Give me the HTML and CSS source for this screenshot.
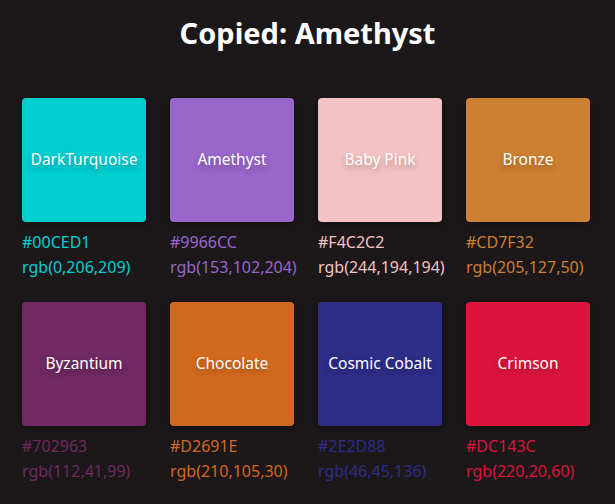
FILE: index.html
```html
<!DOCTYPE html>
<html>
<head>
<meta charset="utf-8">
<link rel="stylesheet" href="styles.css">
</head>
<body>
<h1 class="title">Copied: Amethyst</h1>
<div class="grid">
  <div class="card" style="color:#00CED1">
    <div class="swatch" style="background:#00CED1"><span>DarkTurquoise</span></div>
    <div class="hex">#00CED1</div>
    <div class="rgb">rgb(0,206,209)</div>
  </div>
  <div class="card" style="color:#9966CC">
    <div class="swatch" style="background:#9966CC"><span>Amethyst</span></div>
    <div class="hex">#9966CC</div>
    <div class="rgb">rgb(153,102,204)</div>
  </div>
  <div class="card" style="color:#F4C2C2">
    <div class="swatch" style="background:#F4C2C2"><span>Baby Pink</span></div>
    <div class="hex">#F4C2C2</div>
    <div class="rgb">rgb(244,194,194)</div>
  </div>
  <div class="card" style="color:#CD7F32">
    <div class="swatch" style="background:#CD7F32"><span>Bronze</span></div>
    <div class="hex">#CD7F32</div>
    <div class="rgb">rgb(205,127,50)</div>
  </div>
  <div class="card" style="color:#702963">
    <div class="swatch" style="background:#702963"><span>Byzantium</span></div>
    <div class="hex">#702963</div>
    <div class="rgb">rgb(112,41,99)</div>
  </div>
  <div class="card" style="color:#D2691E">
    <div class="swatch" style="background:#D2691E"><span>Chocolate</span></div>
    <div class="hex">#D2691E</div>
    <div class="rgb">rgb(210,105,30)</div>
  </div>
  <div class="card" style="color:#2E2D88">
    <div class="swatch" style="background:#2E2D88"><span>Cosmic Cobalt</span></div>
    <div class="hex">#2E2D88</div>
    <div class="rgb">rgb(46,45,136)</div>
  </div>
  <div class="card" style="color:#DC143C">
    <div class="swatch" style="background:#DC143C"><span>Crimson</span></div>
    <div class="hex">#DC143C</div>
    <div class="rgb">rgb(220,20,60)</div>
  </div>
</div>
</body>
</html>
```
FILE: styles.css
```css
html, body {
  margin: 0;
  padding: 0;
  background: #1c1819;
}
body {
  font-family: "Noto Sans", "Open Sans", sans-serif;
  width: 615px;
  height: 504px;
  overflow: hidden;
}
.title {
  margin: 0;
  padding-top: 13px;
  height: 98px;
  box-sizing: border-box;
  text-align: center;
  color: #ffffff;
  font-size: 29px;
  font-weight: 700;
  line-height: 40px;
}
.grid {
  display: grid;
  grid-template-columns: repeat(4, 124px);
  column-gap: 24px;
  row-gap: 22px;
  padding-left: 22px;
}
.card {
  display: flex;
  flex-direction: column;
  font-size: 16px;
  line-height: 25px;
}
.swatch {
  width: 124px;
  height: 124px;
  box-sizing: border-box;
  padding-bottom: 1px;
  border-radius: 4px;
  display: flex;
  align-items: center;
  justify-content: center;
  margin-bottom: 8px;
  box-shadow: 0 2px 8px rgba(0,0,0,0.35);
}
.swatch span {
  color: #ffffff;
  font-size: 15.5px;
  text-shadow: 0 3px 6px rgba(0,0,0,0.3);
}
.hex, .rgb {
  white-space: nowrap;
}
```
